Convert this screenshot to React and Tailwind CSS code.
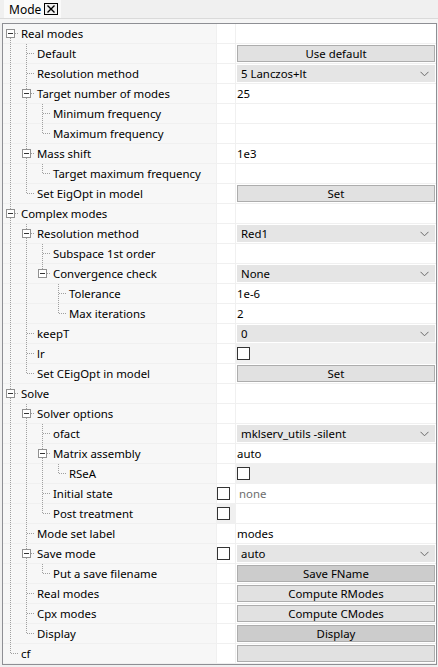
import React from "react";

const R = (level, label, expand, value, check) => ({ level, label, expand, value, check });

const rows = [
  R(0, "Real modes", true),
  R(1, "Default", false, { t: "btn", v: "Use default" }),
  R(1, "Resolution method", false, { t: "sel", v: "5 Lanczos+lt" }),
  R(1, "Target number of modes", true, { t: "txt", v: "25" }),
  R(2, "Minimum frequency"),
  R(2, "Maximum frequency"),
  R(1, "Mass shift", true, { t: "txt", v: "1e3" }),
  R(2, "Target maximum frequency"),
  R(1, "Set EigOpt in model", false, { t: "btn", v: "Set" }),
  R(0, "Complex modes", true),
  R(1, "Resolution method", true, { t: "sel", v: "Red1" }),
  R(2, "Subspace 1st order"),
  R(2, "Convergence check", true, { t: "sel", v: "None" }),
  R(3, "Tolerance", false, { t: "txt", v: "1e-6" }),
  R(3, "Max iterations", false, { t: "txt", v: "2" }),
  R(1, "keepT", false, { t: "sel", v: "0" }),
  R(1, "lr", false, { t: "chk" }),
  R(1, "Set CEigOpt in model", false, { t: "btn", v: "Set" }),
  R(0, "Solve", true),
  R(1, "Solver options", true),
  R(2, "ofact", false, { t: "sel", v: "mklserv_utils -silent" }),
  R(2, "Matrix assembly", true, { t: "txt", v: "auto" }),
  R(3, "RSeA", false, { t: "chk" }),
  R(2, "Initial state", false, { t: "gray", v: "none" }, "white"),
  R(2, "Post treatment", false, null, "gray"),
  R(1, "Mode set label", false, { t: "txt", v: "modes" }),
  R(1, "Save mode", true, { t: "sel", v: "auto" }, "white"),
  R(2, "Put a save filename", false, { t: "btnd", v: "Save FName" }),
  R(1, "Real modes", false, { t: "btn", v: "Compute RModes" }),
  R(1, "Cpx modes", false, { t: "btn", v: "Compute CModes" }),
  R(1, "Display", false, { t: "btnd", v: "Display" }),
  R(0, "cf", false, { t: "btn", v: "" }),
];

rows.forEach((r, i) => {
  let next = false;
  for (let j = i + 1; j < rows.length; j++) {
    if (rows[j].level < r.level) break;
    if (rows[j].level === r.level) {
      next = true;
      break;
    }
  }
  r.hasNext = next;
});
{
  const stack = [];
  rows.forEach((r) => {
    r.guides = stack.slice(0, r.level);
    stack[r.level] = r.hasNext;
  });
}

const LINE = "#a0a0a0";

function TreeLines({ r, first }) {
  const L = r.level;
  const w = 17 + 16 * L;
  const cx = 7 + 16 * L + 0.5;
  return (
    <svg width={w} height={20} className="shrink-0 self-start" shapeRendering="crispEdges">
      {r.guides.map((g, i) =>
        g ? (
          <line key={i} x1={7.5 + 16 * i} y1={0} x2={7.5 + 16 * i} y2={20} stroke={LINE} strokeDasharray="1 1" />
        ) : null
      )}
      {!first && <line x1={cx} y1={0} x2={cx} y2={10} stroke={LINE} strokeDasharray="1 1" />}
      {r.hasNext && <line x1={cx} y1={10} x2={cx} y2={20} stroke={LINE} strokeDasharray="1 1" />}
      <line x1={r.expand ? 12 + 16 * L : 8 + 16 * L} y1={9.5} x2={16 + 16 * L} y2={9.5} stroke={LINE} strokeDasharray="1 1" />
      {r.expand && (
        <g>
          <rect x={3.5 + 16 * L} y={5.5} width={8} height={8} fill="#ffffff" stroke="#919191" />
          <line x1={5 + 16 * L} y1={9.5} x2={10 + 16 * L} y2={9.5} stroke="#333333" />
        </g>
      )}
    </svg>
  );
}

function Box() {
  return <div className="h-[13px] w-[13px] shrink-0 border border-[#333333] bg-white" />;
}

function Chevron() {
  return (
    <svg width="9" height="6" viewBox="0 0 9 6" className="shrink-0">
      <path d="M0.5 0.8 L4.5 4.8 L8.5 0.8" fill="none" stroke="#6a6a6a" strokeWidth="1" />
    </svg>
  );
}

function Value({ v }) {
  if (!v) return null;
  switch (v.t) {
    case "btn":
    case "btnd":
      return (
        <div
          className={
            "m-px flex h-[17px] flex-1 items-center justify-center border border-[#adadad] pt-px text-black " +
            (v.t === "btnd" ? "bg-[#cccccc]" : "bg-[#e1e1e1]")
          }
        >
          {v.v}
        </div>
      );
    case "sel":
      return (
        <div className="m-px flex h-[17px] flex-1 items-center justify-between bg-[#e5e5e5] pl-[4px] pr-[6px] text-black">
          <span className="pt-px">{v.v}</span>
          <Chevron />
        </div>
      );
    case "txt":
      return <div className="pl-px pt-px text-black">{v.v}</div>;
    case "gray":
      return <div className="pl-[3px] pt-px text-[#6d6d6d]">{v.v}</div>;
    case "chk":
      return (
        <div className="ml-px">
          <Box />
        </div>
      );
    default:
      return null;
  }
}

function Row({ r, first }) {
  const valueGray = r.value && r.value.t === "chk";
  return (
    <div className="flex h-[20px] border-b border-[#f0f0f0]">
      <div className="flex w-[213px] shrink-0 items-center overflow-hidden whitespace-nowrap bg-[#f7f7f7] text-black">
        <TreeLines r={r} first={first} />
        <span className="pl-px pt-px">{r.label}</span>
      </div>
      <div
        className={
          "flex w-[19px] shrink-0 items-center border-l border-[#f0f0f0] " +
          (r.check === "gray" ? "bg-[#f0f0f0]" : "bg-white")
        }
      >
        {r.check && <Box />}
      </div>
      <div
        className={
          "flex flex-1 items-center border-l border-[#f0f0f0] " + (valueGray ? "bg-[#f0f0f0]" : "bg-white")
        }
      >
        <Value v={r.value} />
      </div>
    </div>
  );
}

export default function App() {
  return (
    <div className="h-[667px] w-[438px] overflow-hidden bg-[#f0f0f0] font-['Noto_Sans','Open_Sans',sans-serif] text-[11.4px] leading-none">
      <div className="flex h-[19px] border-b border-[#dadada]">
        <div className="ml-[4px] flex h-[18px] items-center gap-[3px] bg-[#fafafa] pl-[5px] pr-[3px]">
          <span className="pt-px text-[12px] text-black">Mode</span>
          <div className="flex h-[12px] w-[14px] items-center justify-center border border-black bg-[#f0f0f0]">
            <svg width="8" height="8" viewBox="0 0 8 8">
              <path d="M0.5 0.5 L7.5 7.5 M7.5 0.5 L0.5 7.5" stroke="#000" strokeWidth="1.4" />
            </svg>
          </div>
        </div>
      </div>
      <div className="h-[4px] bg-[#f5f5f5]" />
      <div className="ml-[2px] w-[435px] border border-[#8e8f94] bg-white">
        {rows.map((r, i) => (
          <Row key={i} r={r} first={i === 0} />
        ))}
      </div>
    </div>
  );
}
